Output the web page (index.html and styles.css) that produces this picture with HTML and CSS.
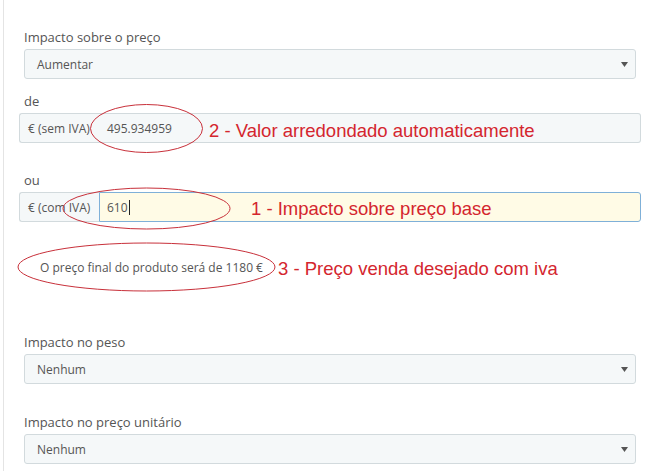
FILE: index.html
```html
<!DOCTYPE html>
<html lang="pt">
<head>
<meta charset="utf-8">
<title>Impacto sobre o preço</title>
<link rel="stylesheet" href="styles.css">
</head>
<body>
<div class="page">
  <div class="panel">
    <div class="group g1">
      <div class="label">Impacto sobre o preço</div>
      <div class="select"><span>Aumentar</span><svg class="caret" width="7" height="5" viewBox="0 0 7 5"><path d="M0 0H7L3.5 5Z" fill="#555"/></svg></div>
    </div>
    <div class="group g2">
      <div class="label">de</div>
      <div class="input-group">
        <div class="addon">€ (sem IVA)</div>
        <div class="field readonly">495.934959</div>
      </div>
    </div>
    <div class="group g3">
      <div class="label">ou</div>
      <div class="input-group">
        <div class="addon">€ (com IVA)</div>
        <div class="field focused">610<span class="cursor"></span></div>
      </div>
    </div>
    <div class="final-price">O preço final do produto será de 1180 €</div>
    <div class="group g4">
      <div class="label">Impacto no peso</div>
      <div class="select"><span>Nenhum</span><svg class="caret" width="7" height="5" viewBox="0 0 7 5"><path d="M0 0H7L3.5 5Z" fill="#555"/></svg></div>
    </div>
    <div class="group g5">
      <div class="label">Impacto no preço unitário</div>
      <div class="select"><span>Nenhum</span><svg class="caret" width="7" height="5" viewBox="0 0 7 5"><path d="M0 0H7L3.5 5Z" fill="#555"/></svg></div>
    </div>
  </div>

  <svg class="marks" width="649" height="471" viewBox="0 0 649 471">
    <ellipse cx="146.5" cy="128.5" rx="56" ry="24" fill="none" stroke="#c8303a" stroke-width="1"/>
    <ellipse cx="146.5" cy="208.5" rx="83.5" ry="20.5" fill="none" stroke="#c8303a" stroke-width="1"/>
    <ellipse cx="146.5" cy="267" rx="128.5" ry="24" fill="none" stroke="#c8303a" stroke-width="1"/>
  </svg>
  <span class="note n2">2 - Valor arredondado automaticamente</span>
  <span class="note n1">1 - Impacto sobre preço base</span>
  <span class="note n3">3 - Preço venda desejado com iva</span>
</div>
</body>
</html>
```
FILE: styles.css
```css
html, body {
  margin: 0;
  padding: 0;
  background: #fff;
}
body {
  font-family: "Open Sans", "Noto Sans", sans-serif;
  font-size: 12px;
  color: #555;
}
.page {
  position: relative;
  width: 649px;
  height: 471px;
  overflow: hidden;
}
.panel {
  margin-left: 3px;
  border-left: 1px solid #e4e4e4;
  height: 471px;
  box-sizing: border-box;
  padding: 28px 13px 0 20px;
}
.label {
  line-height: 18px;
  height: 18px;
  margin-bottom: 3px;
  font-size: 13px;
  color: #555;
}
.g2 { margin-top: 13px; }
.g3 { margin-top: 28px; }
.g4 { margin-top: 56px; }
.g5 { margin-top: 29px; }
.select {
  height: 30px;
  box-sizing: border-box;
  border: 1px solid #d2dadd;
  border-radius: 3px;
  background: #f5f8f9;
  display: flex;
  align-items: center;
  justify-content: space-between;
  padding: 0 7px 0 12px;
  color: #555;
}
.input-group {
  display: flex;
  height: 30px;
  margin: 0 -5px;
}
.addon {
  box-sizing: border-box;
  width: 80px;
  height: 30px;
  display: flex;
  align-items: center;
  padding: 0 0 0 8px;
  font-size: 12px;
  white-space: nowrap;
  background: #f5f8f9;
  border: 1px solid #d2dadd;
  border-right: none;
  border-radius: 3px 0 0 3px;
  color: #555;
}
.field {
  flex: 1;
  box-sizing: border-box;
  height: 30px;
  display: flex;
  align-items: center;
  padding: 0 7px;
  border: 1px solid #d2dadd;
  border-radius: 0 3px 3px 0;
  background: #f5f8f9;
  color: #555;
}
.field.readonly {
  border-left: none;
  padding-left: 8px;
}
.field.focused {
  background: #fffbe6;
  border-color: #7fb0d8;
}
.cursor {
  display: inline-block;
  width: 1px;
  height: 15px;
  background: #222;
  margin-left: 1px;
}
.final-price {
  margin-top: 37px;
  margin-left: 16px;
  line-height: 18px;
  height: 18px;
  color: #555;
}
.marks {
  position: absolute;
  left: 0;
  top: 0;
  pointer-events: none;
}
.note {
  position: absolute;
  font-family: "Liberation Sans", Arial, sans-serif;
  font-size: 18.5px;
  line-height: 18px;
  color: #d4262e;
  white-space: nowrap;
}
.n2 { left: 209px; top: 122px; }
.n1 { left: 251px; top: 200px; }
.n3 { left: 278px; top: 260px; }
```
